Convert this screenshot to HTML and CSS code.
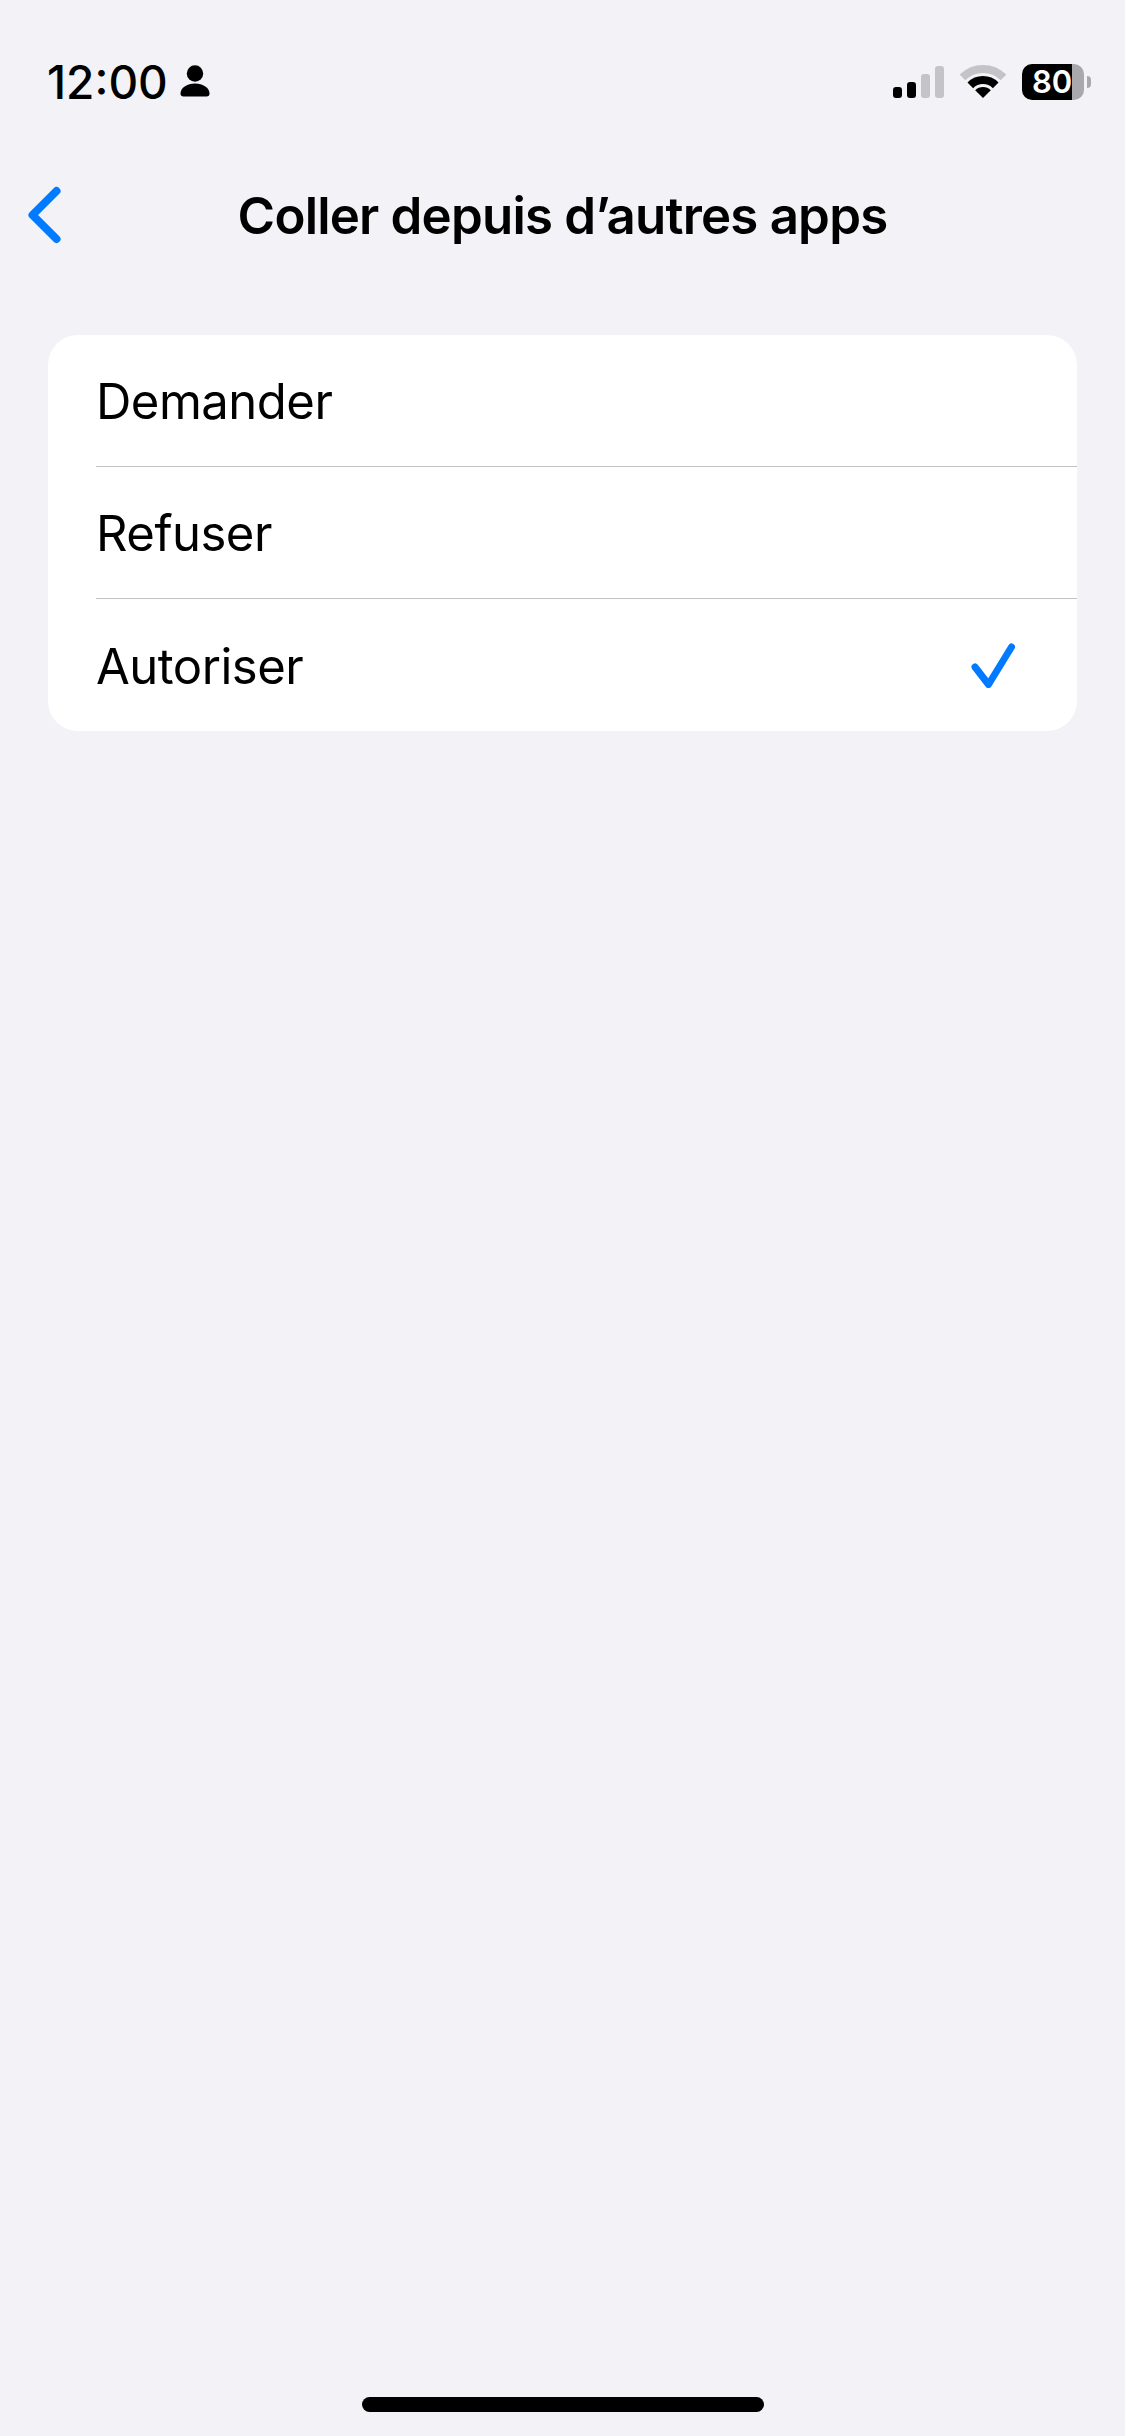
FILE: index.html
```html
<!DOCTYPE html>
<html lang="fr">
<head>
  <meta charset="UTF-8">
  <title>Coller depuis d’autres apps</title>
  <link rel="stylesheet" href="styles.css">
</head>
<body>
  <div class="screen">
    <div class="status-bar">
      <div class="status-left">
        <span class="time">12:00</span>
        <svg class="person" width="30" height="32" viewBox="0 0 30 32">
          <circle cx="15" cy="8.5" r="8.2" fill="#000"/>
          <path d="M0.5 28.5C0.5 23 7 18.6 15 18.6S29.5 23 29.5 28.5C29.5 30.5 28.5 31.5 26.5 31.5H3.5C1.5 31.5 0.5 30.5 0.5 28.5Z" fill="#000"/>
        </svg>
      </div>
      <div class="status-right">
        <div class="signal">
          <span class="bar bar-1"></span>
          <span class="bar bar-2"></span>
          <span class="bar bar-3 off"></span>
          <span class="bar bar-4 off"></span>
        </div>
        <svg class="wifi" width="46" height="34" viewBox="0 0 46 34">
          <path d="M2.5 12.5A29 29 0 0 1 43.5 12.5" fill="none" stroke="#c4c4c8" stroke-width="8"/>
          <path d="M10.3 20.3A18 18 0 0 1 35.7 20.3" fill="none" stroke="#000" stroke-width="8"/>
          <path d="M23 33L15.2 25.2A11 11 0 0 1 30.8 25.2Z" fill="#000"/>
        </svg>
        <div class="battery">
          <div class="battery-body">80</div>
          <span class="battery-cap"></span>
        </div>
      </div>
    </div>

    <div class="nav">
      <svg class="back" width="36" height="60" viewBox="0 0 36 60">
        <path d="M29.500 6L5.500 30L29.500 54" fill="none" stroke="#007aff" stroke-width="8" stroke-linecap="round" stroke-linejoin="round"/>
      </svg>
      <h1 class="nav-title">Coller depuis d’autres apps</h1>
    </div>

    <div class="card">
      <div class="row"><span class="row-label">Demander</span></div>
      <div class="row"><span class="row-label">Refuser</span></div>
      <div class="row">
        <span class="row-label">Autoriser</span>
        <svg class="check" width="46" height="46" viewBox="0 0 46 46">
          <path d="M5 25L18.500 42.500L41.500 5" fill="none" stroke="#007aff" stroke-width="7" stroke-linecap="round" stroke-linejoin="round"/>
        </svg>
      </div>
    </div>

    <div class="home-bar"></div>
  </div>
</body>
</html>
```

FILE: styles.css
```css
body {
  margin: 0;
  background: #f2f2f7;
  font-family: Inter, "Liberation Sans", sans-serif;
  color: #000;
}
.screen {
  width: 1125px;
  height: 2436px;
  display: flex;
  flex-direction: column;
  overflow: hidden;
}

/* status bar */
.status-bar {
  height: 112px;
  padding: 52px 34px 0 47px;
  box-sizing: border-box;
  display: flex;
  justify-content: space-between;
  align-items: flex-start;
}
.status-left {
  display: flex;
  align-items: center;
  gap: 12px;
  height: 48px;
}
.time {
  font-size: 46px;
  font-weight: 500;
  line-height: 48px;
  padding-top: 11px;
}
.person {
  margin-top: 10px;
}
.status-right {
  display: flex;
  align-items: flex-start;
  height: 48px;
}
.signal {
  display: flex;
  align-items: flex-end;
  gap: 5px;
  height: 32px;
  margin-top: 14px;
  margin-right: 16px;
}
.bar {
  width: 9px;
  background: #000;
  border-radius: 3px;
}
.bar-1 { height: 11px; }
.bar-2 { height: 16px; }
.bar-3 { height: 24px; }
.bar-4 { height: 32px; }
.bar.off {
  background: #c4c4c8;
}
.wifi {
  margin-top: 13px;
  margin-right: 16px;
}
.battery {
  display: flex;
  align-items: center;
  gap: 3px;
  margin-top: 12px;
}
.battery-body {
  width: 62px;
  height: 36px;
  border-radius: 10px;
  background: linear-gradient(to right, #000 50px, #a9a9ad 50px);
  color: #fff;
  font-size: 31px;
  font-weight: 600;
  line-height: 36px;
  text-align: left;
  padding-left: 10px;
  box-sizing: border-box;
}
.battery-cap {
  width: 4px;
  height: 12px;
  background: #a9a9ad;
  border-radius: 0 6px 6px 0;
}

/* navigation */
.nav {
  height: 96px;
  margin-top: 55px;
  padding-left: 27px;
  display: flex;
  align-items: center;
  position: relative;
}
.nav-title {
  position: absolute;
  left: 0;
  right: 0;
  margin: 0;
  text-align: center;
  font-size: 51px;
  font-weight: 600;
  letter-spacing: -0.8px;
}

/* options list */
.card {
  margin: 72px 48px 0;
  background: #fff;
  border-radius: 30px;
  overflow: hidden;
}
.row {
  height: 132px;
  margin-left: 48px;
  padding-right: 61px;
  display: flex;
  align-items: center;
  justify-content: space-between;
  border-top: 1px solid #c2c2c4;
  box-sizing: border-box;
}
.row:first-child {
  height: 131px;
  border-top: none;
}
.row:last-child {
  height: 133px;
}
.row-label {
  font-size: 49px;
  letter-spacing: -0.5px;
  padding-top: 2px;
}

.home-bar {
  width: 402px;
  height: 15px;
  margin: auto auto 24px;
  background: #000;
  border-radius: 8px;
}
```
